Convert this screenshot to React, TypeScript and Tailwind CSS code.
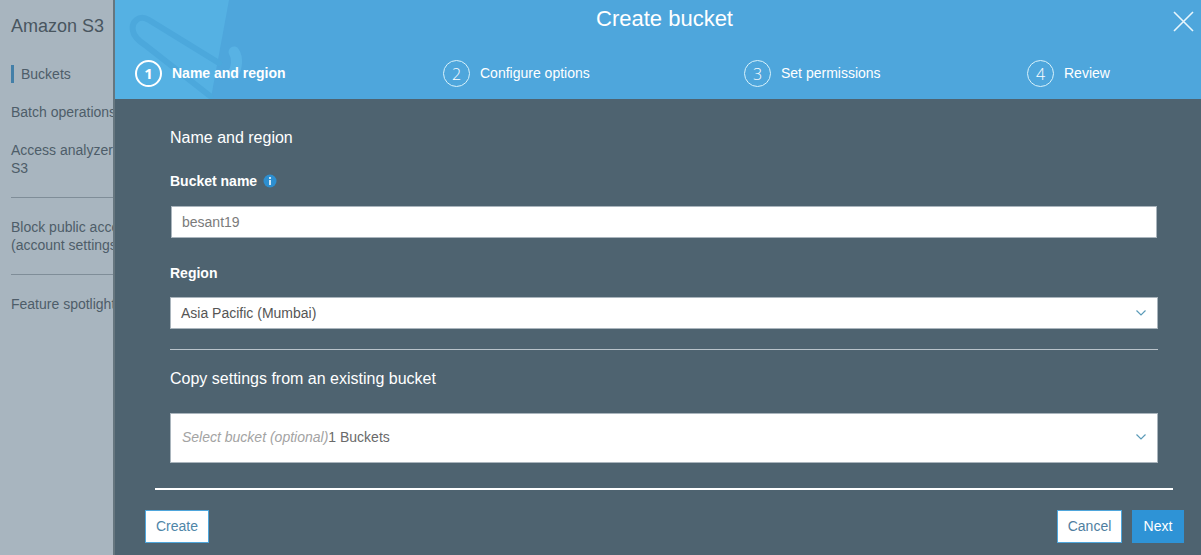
import React from "react";

const Chevron = () => (
  <svg width="10" height="6" viewBox="0 0 10 6" fill="none" stroke="#5b9bb8" strokeWidth="1.2" className="block">
    <path d="M0.5 0.5 L5 5 L9.5 0.5" />
  </svg>
);

const Step = ({ n, label, active, w }: { n: number; label: string; active?: boolean; w: string }) => (
  <div className={`flex items-center ${w}`}>
    <div
      className={`w-[27px] h-[27px] rounded-full flex items-center justify-center text-white font-['Open_Sans',sans-serif] ${
        active ? "border-2 border-white text-[15px] font-bold" : "border border-[#d8f2fb] text-[16px] font-light"
      }`}
    >
      {n}
    </div>
    <span className={`ml-[10px] text-[14px] text-white ${active ? "font-bold" : ""}`}>{label}</span>
  </div>
);

function SideItem({ children, className = "" }: { children: React.ReactNode; className?: string }) {
  return <div className={`text-[14px] leading-[18px] text-[#4e5d69] whitespace-nowrap ${className}`}>{children}</div>;
}

export default function App() {
  return (
    <div className="w-[1201px] h-[555px] flex overflow-hidden bg-[#a8b5bf] font-['Liberation_Sans',Arial,sans-serif]">
      <aside className="w-[113px] shrink-0 pl-[11px] pt-[15px] overflow-hidden">
        <div className="text-[18px] leading-[22px] text-[#49565f] whitespace-nowrap">Amazon S3</div>
        <div className="mt-[28px] flex items-center h-[18px]">
          <div className="w-[3px] h-[18px] bg-[#437fa8]" />
          <SideItem className="ml-[7px]">Buckets</SideItem>
        </div>
        <SideItem className="mt-[20px]">Batch operations</SideItem>
        <SideItem className="mt-[20px]">
          Access analyzer for
          <br />
          S3
        </SideItem>
        <div className="mt-[20px] h-px w-[200px] bg-[#7f8d98]" />
        <SideItem className="mt-[20px]">
          Block public access
          <br />
          (account settings)
        </SideItem>
        <div className="mt-[20px] h-px w-[200px] bg-[#7f8d98]" />
        <SideItem className="mt-[20px]">Feature spotlight</SideItem>
      </aside>

      <main className="w-[1088px] h-[555px] flex flex-col bg-[#4e6370] border-l-2 border-[#66767f]">
        <header className="relative h-[99px] shrink-0 bg-[#4ea6dc] overflow-hidden">
          <div className="absolute left-0 top-0 w-[114px] h-[99px] bg-[#55b1e3] [clip-path:polygon(0_0,100%_0,84%_100%,0_100%)]" />
          <svg className="absolute left-0 top-0" width="140" height="99" viewBox="0 0 140 99" fill="none" strokeLinecap="round">
            <path d="M104 63 L34 20 C24 14 16 22 18 31 C19 37 24 41 30 45 L95 96" stroke="#4ca8dc" strokeWidth="6" />
            <path d="M119 52 C123 58 122 68 118 74" stroke="#58b2e4" strokeWidth="11" />
          </svg>
          <h1 className="relative text-center text-[22px] leading-[26px] pt-[6px] text-white pl-[13px]">Create bucket</h1>
          <svg className="absolute right-[7px] top-[11px]" width="21" height="21" viewBox="0 0 21 21" stroke="#e9f6fc" strokeWidth="1.6">
            <path d="M1 1 L20 20 M20 1 L1 20" />
          </svg>
          <div className="relative flex pl-[20px] mt-[28px]">
            <Step n={1} label="Name and region" active w="w-[308px]" />
            <Step n={2} label="Configure options" w="w-[301px]" />
            <Step n={3} label="Set permissions" w="w-[283px]" />
            <Step n={4} label="Review" w="w-[120px]" />
          </div>
        </header>

        <div className="flex-1 flex flex-col pl-[55px] pr-[55px]">
          <h2 className="mt-[29px] text-[16px] leading-[20px] text-white">Name and region</h2>
          <div className="mt-[24px] flex items-center h-[18px]">
            <span className="text-[14px] font-bold text-white">Bucket name</span>
            <svg className="ml-[6px]" width="14" height="14" viewBox="0 0 14 14">
              <circle cx="7" cy="7" r="6.5" fill="#2d8fd0" />
              <rect x="6" y="6" width="2" height="5" fill="#cfe6f5" />
              <rect x="6" y="3" width="2" height="2" fill="#cfe6f5" />
            </svg>
          </div>
          <div className="mt-[16px] ml-px w-[986px] h-[32px] flex items-center bg-white border border-[#aab5bd] px-[10px] text-[14px] text-[#7b7b7b]">
            besant19
          </div>
          <label className="mt-[26px] h-[18px] block text-[14px] leading-[18px] font-bold text-white">Region</label>
          <div className="mt-[15px] w-[988px] h-[32px] flex items-center justify-between bg-white border border-[#aab5bd] pl-[10px] pr-[11px] text-[14px] text-[#555]">
            <span>Asia Pacific (Mumbai)</span>
            <Chevron />
          </div>
          <div className="mt-[20px] w-[988px] h-px bg-[#b9c3ca]" />
          <h2 className="mt-[19px] text-[16px] leading-[20px] text-white">Copy settings from an existing bucket</h2>
          <div className="mt-[24px] w-[988px] h-[50px] flex items-center justify-between bg-white border border-[#aab5bd] pl-[11px] pr-[11px] pb-[2px] text-[14px] text-[#6a6a6a]">
            <span>
              <span className="italic text-[#a3a3a3]">Select bucket (optional)</span>1 Buckets
            </span>
            <Chevron />
          </div>
          <div className="mt-[25px] -ml-[15px] w-[1018px] h-[2px] bg-white" />
        </div>

        <footer className="flex items-center justify-between pl-[30px] pr-[17px] pb-[12px]">
          <button className="w-[64px] h-[33px] bg-white border border-[#4ea6dc] text-[14px] text-[#4f86a8]">Create</button>
          <div className="flex gap-[10px]">
            <button className="w-[65px] h-[33px] bg-white border border-[#4ea6dc] text-[14px] text-[#4f7ea0]">Cancel</button>
            <button className="w-[52px] h-[33px] bg-[#2e93d6] text-[14px] font-medium text-white">Next</button>
          </div>
        </footer>
      </main>
    </div>
  );
}
